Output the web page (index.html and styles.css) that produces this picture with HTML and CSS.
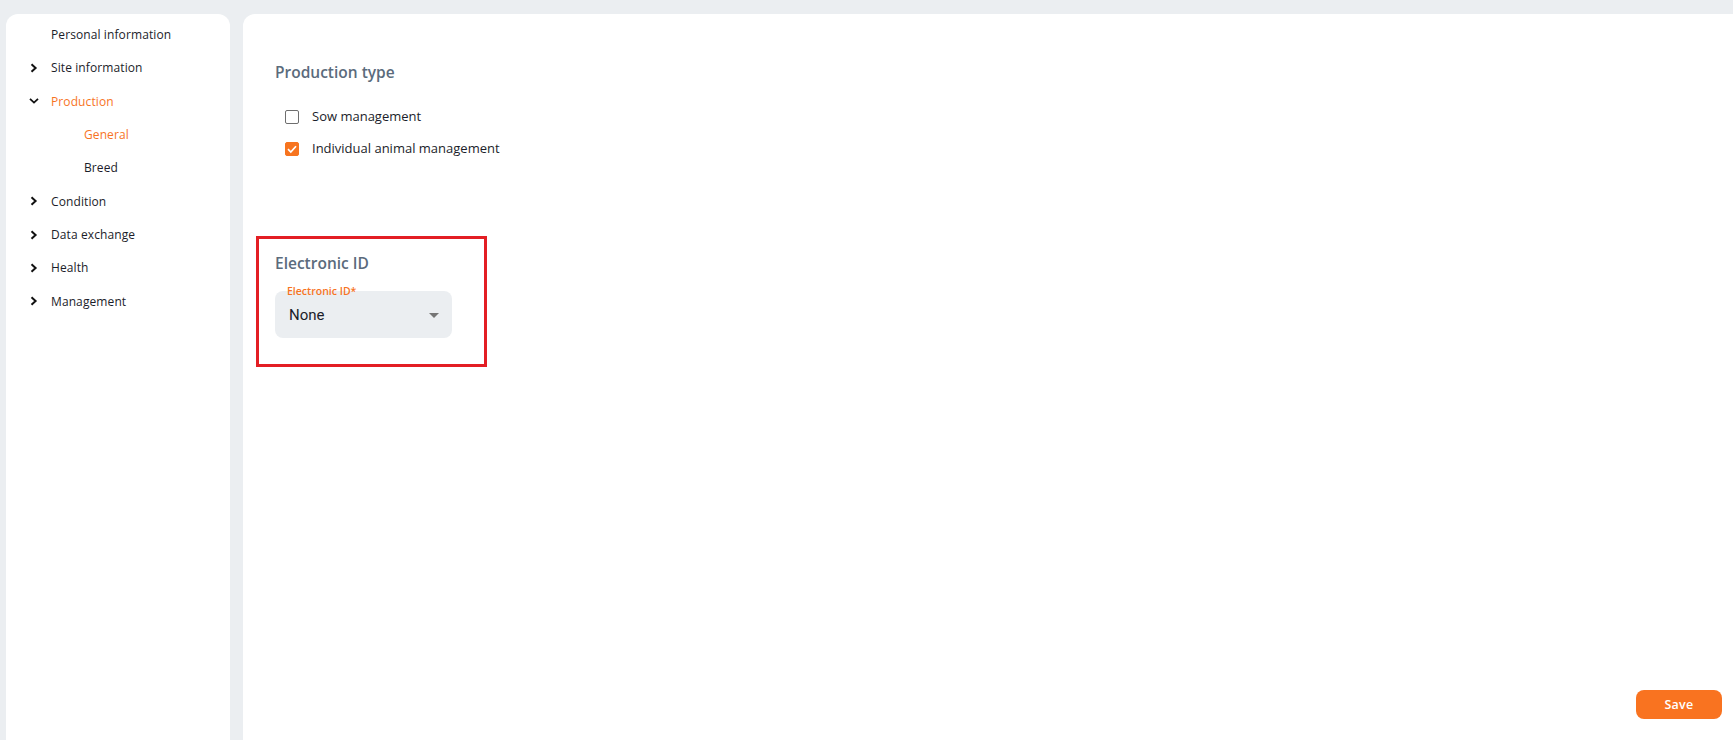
FILE: index.html
```html
<!DOCTYPE html>
<html lang="en">
<head>
<meta charset="utf-8">
<title>Settings - Production</title>
<link rel="stylesheet" href="styles.css">
</head>
<body>
<div class="layout">
  <nav class="sidebar">
    <div class="nav-item"><span class="chev"></span><span class="nav-text">Personal information</span></div>
    <div class="nav-item"><span class="chev"><svg width="8" height="10" viewBox="0 0 8 10"><path d="M1.5 1.2 L5.6 5 L1.5 8.8" fill="none" stroke="#111" stroke-width="2"/></svg></span><span class="nav-text">Site information</span></div>
    <div class="nav-item active"><span class="chev"><svg width="10" height="8" viewBox="0 0 10 8"><path d="M1 1.8 L5 5.6 L9 1.8" fill="none" stroke="#111" stroke-width="1.8"/></svg></span><span class="nav-text">Production</span></div>
    <div class="nav-item sub active"><span class="nav-text">General</span></div>
    <div class="nav-item sub"><span class="nav-text">Breed</span></div>
    <div class="nav-item"><span class="chev"><svg width="8" height="10" viewBox="0 0 8 10"><path d="M1.5 1.2 L5.6 5 L1.5 8.8" fill="none" stroke="#111" stroke-width="2"/></svg></span><span class="nav-text">Condition</span></div>
    <div class="nav-item"><span class="chev"><svg width="8" height="10" viewBox="0 0 8 10"><path d="M1.5 1.2 L5.6 5 L1.5 8.8" fill="none" stroke="#111" stroke-width="2"/></svg></span><span class="nav-text">Data exchange</span></div>
    <div class="nav-item"><span class="chev"><svg width="8" height="10" viewBox="0 0 8 10"><path d="M1.5 1.2 L5.6 5 L1.5 8.8" fill="none" stroke="#111" stroke-width="2"/></svg></span><span class="nav-text">Health</span></div>
    <div class="nav-item"><span class="chev"><svg width="8" height="10" viewBox="0 0 8 10"><path d="M1.5 1.2 L5.6 5 L1.5 8.8" fill="none" stroke="#111" stroke-width="2"/></svg></span><span class="nav-text">Management</span></div>
  </nav>
  <main class="panel">
    <div class="content">
      <section class="section">
        <h2 class="section-title">Production type</h2>
        <label class="check-row">
          <span class="box"></span>
          <span class="check-label">Sow management</span>
        </label>
        <label class="check-row">
          <span class="box checked"><svg width="14" height="14" viewBox="0 0 14 14"><path d="M3 7.2 L5.8 10 L11 4.2" fill="none" stroke="#fff" stroke-width="1.7"/></svg></span>
          <span class="check-label">Individual animal management</span>
        </label>
      </section>
      <section class="section highlight">
        <h2 class="section-title">Electronic ID</h2>
        <div class="select">
          <span class="select-label">Electronic ID*</span>
          <span class="select-value">None</span>
          <span class="select-arrow"></span>
        </div>
      </section>
    </div>
    <div class="footer">
      <button class="save">Save</button>
    </div>
  </main>
</div>
</body>
</html>
```

FILE: styles.css
```css
* { box-sizing: border-box; }
html, body { margin: 0; padding: 0; }
body {
  background: #ebeef1;
  font-family: "Open Sans", "Liberation Sans", sans-serif;
  color: #1b1d2a;
  height: 740px;
  overflow: hidden;
}
.layout {
  display: flex;
  gap: 13px;
  padding: 14px 0 0 6px;
}
.sidebar {
  width: 224px;
  height: 746px;
  background: #fff;
  border-radius: 12px;
  padding-top: 4px;
  flex-shrink: 0;
}
.nav-item {
  display: flex;
  align-items: center;
  height: 33.33px;
  padding-left: 20px;
  font-size: 12px;
  letter-spacing: 0.1px;
}
.chev {
  width: 16px;
  height: 16px;
  display: flex;
  align-items: center;
  justify-content: center;
  margin-right: 9px;
}
.nav-item.active { color: #f7741f; }
.nav-item.sub { padding-left: 78px; }
.panel {
  flex: 1;
  height: 746px;
  background: #fff;
  border-radius: 12px 0 0 12px;
  display: flex;
  flex-direction: column;
}
.content {
  flex: 1;
  padding: 46px 32px 0 32px;
}
.section-title {
  margin: 0 0 17px 0;
  font-size: 15.5px;
  line-height: 24px;
  font-weight: 600;
  color: #5b6b7c;
}
.check-row {
  display: flex;
  align-items: center;
  height: 32px;
  padding-left: 10px;
}
.box {
  width: 14px;
  height: 14px;
  border: 1.5px solid #6e6e6e;
  border-radius: 2px;
  margin-right: 13px;
  display: flex;
  align-items: center;
  justify-content: center;
}
.box.checked {
  background: #f7741f;
  border-color: #f7741f;
}
.box.checked svg { flex-shrink: 0; }
.check-label {
  font-size: 13px;
  color: #1b1d2a;
  position: relative;
  top: -1px;
}
.highlight {
  margin-top: 71px;
  margin-left: -19px;
  width: 231px;
  border: 3px solid #e31e24;
  padding: 12px 16px 26px 16px;
}
.highlight .section-title { margin-bottom: 16px; }
.select {
  position: relative;
  width: 177px;
  height: 47px;
  background: #ebeef1;
  border-radius: 8px;
  display: flex;
  align-items: center;
  padding: 1px 14px 0 14px;
}
.select-label {
  position: absolute;
  left: 12px;
  top: -6px;
  font-size: 10.5px;
  font-weight: 600;
  color: #f7741f;
  line-height: 12px;
}
.select-value {
  flex: 1;
  font-family: Roboto, "Liberation Sans", sans-serif;
  font-size: 15px;
  color: #1b1d2a;
}
.select-arrow {
  width: 0;
  height: 0;
  border-left: 5px solid transparent;
  border-right: 5px solid transparent;
  border-top: 5px solid #757575;
  margin-right: -1px;
}
.footer {
  display: flex;
  justify-content: flex-end;
  padding: 0 11px 41px 0;
}
.save {
  width: 86px;
  height: 29px;
  border: none;
  border-radius: 8px;
  background: #f97320;
  color: #fff;
  font-family: "Open Sans", "Liberation Sans", sans-serif;
  font-size: 12.5px;
  font-weight: 600;
  letter-spacing: 0.3px;
}
```
